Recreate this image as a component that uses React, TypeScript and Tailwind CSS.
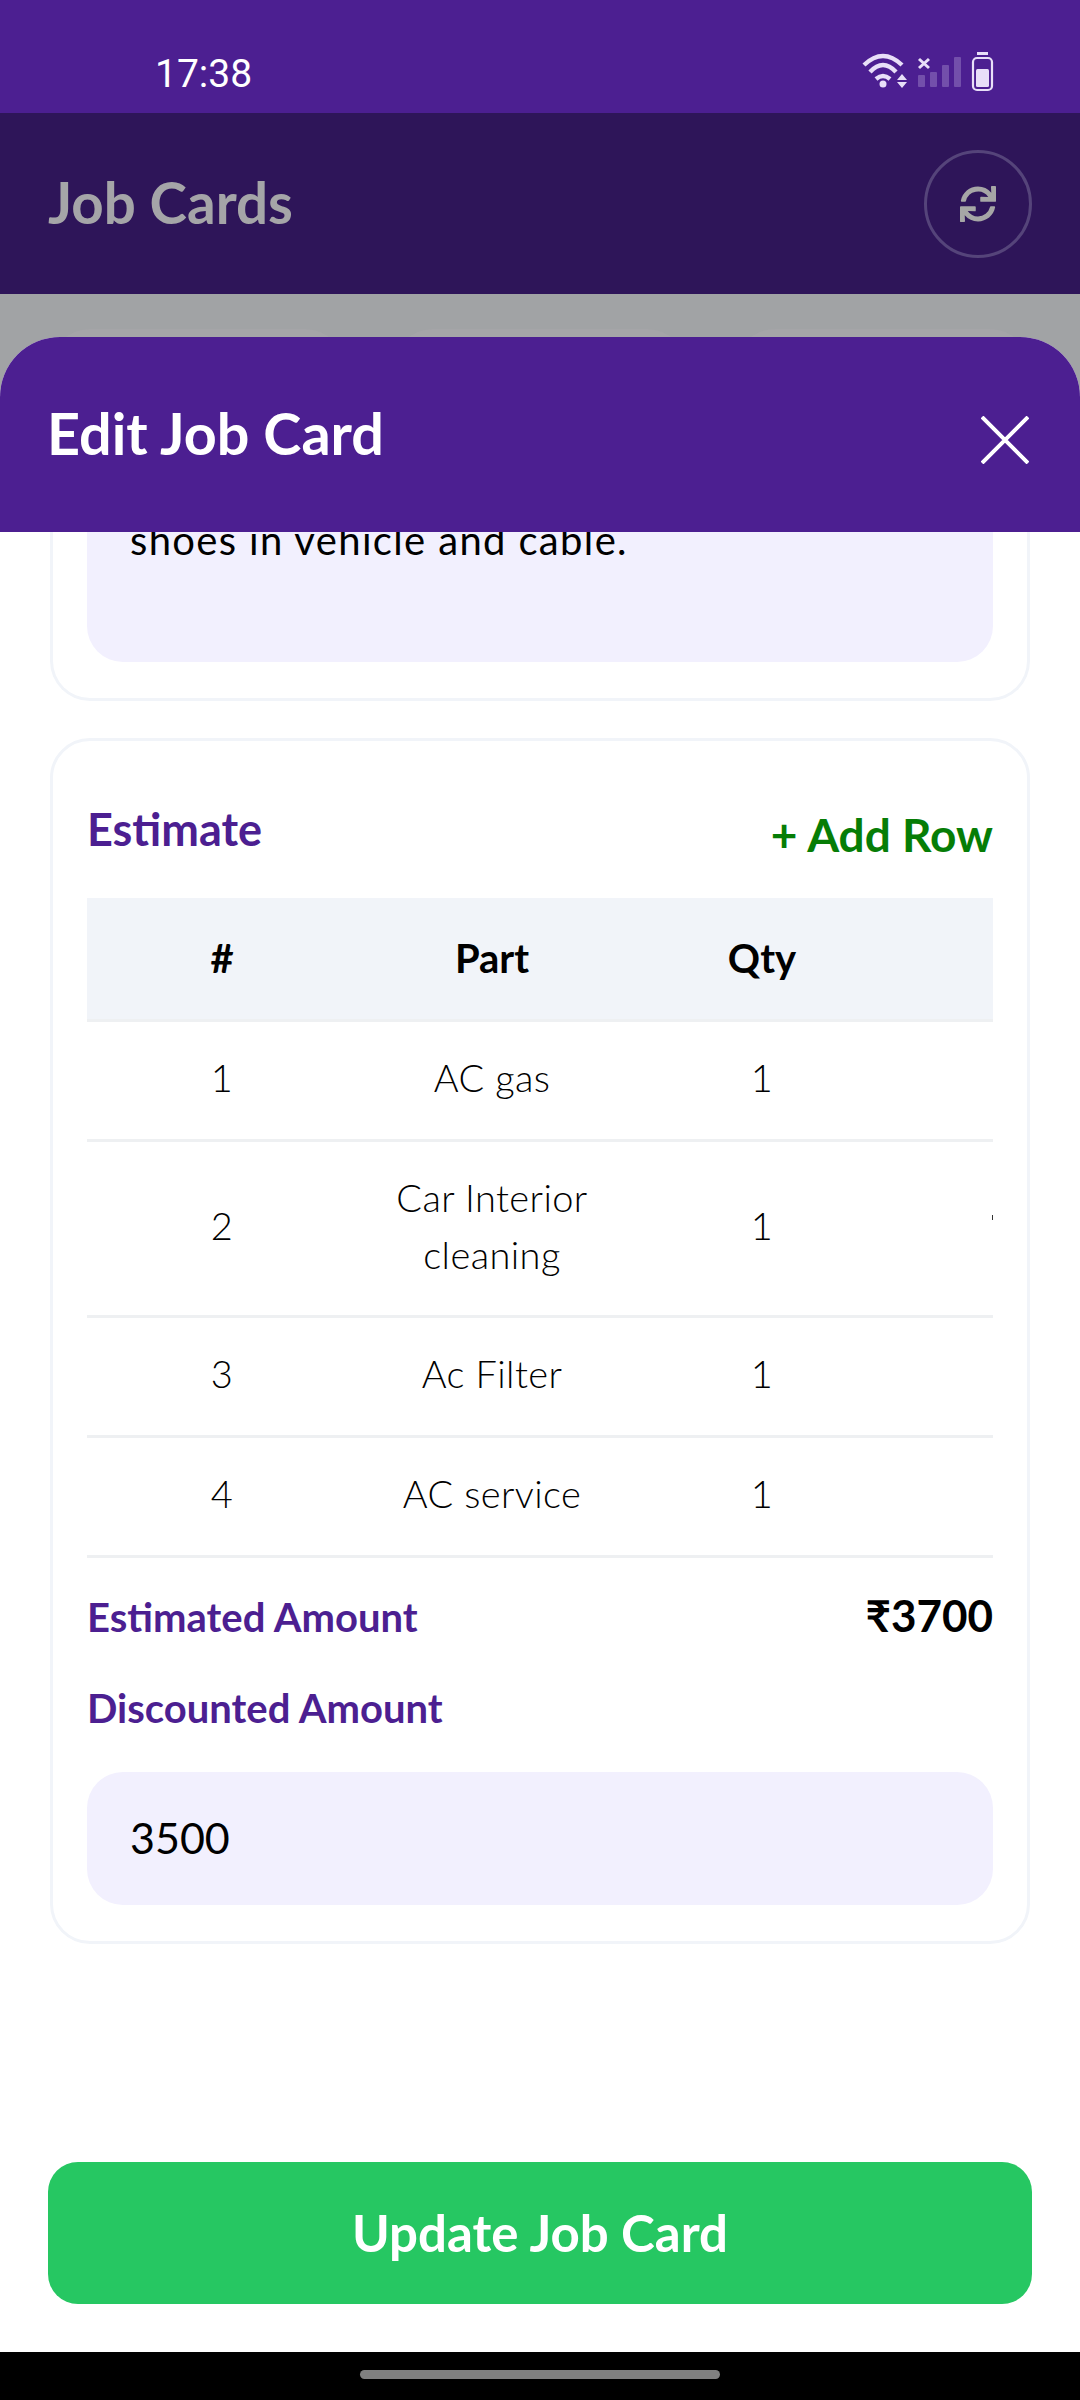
import React from 'react';
import { FaSync } from 'react-icons/fa';

const PURPLE = 'bg-[#4c1f91]';

const rows = [
  { id: '1', part: ['AC gas'], qty: '1', h: 'h-[120px]' },
  { id: '2', part: ['Car Interior', 'cleaning'], qty: '1', h: 'h-[176px]' },
  { id: '3', part: ['Ac Filter'], qty: '1', h: 'h-[120px]' },
  { id: '4', part: ['AC service'], qty: '1', h: 'h-[120px]' },
];

const StatusIcons = () => (
  <svg width="136" height="44" viewBox="0 0 136 44" className="text-[#e8dff8]">
    {/* wifi */}
    <g fill="none" stroke="currentColor" strokeWidth="4.4">
      <path d="M4 15 Q23 -3 42 15" />
      <path d="M10 22 Q23 8 36 22" />
      <path d="M16 29 Q23 23 30 29" />
    </g>
    <circle cx="23" cy="34" r="3.5" fill="currentColor" />
    <path d="M42 24 L47 30 H37 Z M42 38 L37 32 H47 Z" fill="currentColor" />
    {/* no signal */}
    <path d="M59 9 L69 18 M69 9 L59 18" stroke="currentColor" strokeWidth="3" fill="none" />
    <g fill="currentColor" opacity="0.25">
      <rect x="58" y="25" width="7" height="12" rx="1" />
      <rect x="70" y="22" width="7" height="15" rx="1" />
      <rect x="82" y="15" width="7" height="22" rx="1" />
      <rect x="94" y="7" width="7" height="30" rx="1" />
    </g>
    {/* battery */}
    <rect x="117" y="2" width="11" height="3" fill="currentColor" />
    <rect x="113" y="8" width="19" height="32" rx="4" fill="none" stroke="currentColor" strokeWidth="2.2" />
    <rect x="116" y="19" width="13" height="18" rx="1.5" fill="currentColor" />
  </svg>
);

const CloseIcon = () => (
  <svg width="48" height="48" viewBox="0 0 48 48" fill="none" stroke="white" strokeWidth="4">
    <path d="M1 1 L47 47 M47 1 L1 47" />
  </svg>
);

export default function App() {
  return (
    <div className="relative flex h-[2400px] w-[1080px] flex-col overflow-hidden bg-black font-['Lato',sans-serif]">
      {/* status bar */}
      <div className={`flex h-[113px] shrink-0 items-start justify-between ${PURPLE} pl-[155px] pr-[84px]`}>
        <span className="mt-[52px] font-['Roboto',sans-serif] text-[39px] leading-[44px] font-normal text-white">17:38</span>
        <div className="mt-[50px]">
          <StatusIcons />
        </div>
      </div>

      {/* screen behind the sheet, dimmed */}
      <div className="flex h-[181px] shrink-0 items-center justify-between bg-[#2e1559] pr-[48px] pl-[48px]">
        <span className="pb-[2px] text-[56.5px] font-bold text-[#a5a5a8]">Job Cards</span>
        <div className="flex h-[108px] w-[108px] items-center justify-center rounded-full border-[3px] border-[#55447a] text-[#a6a6a6]">
          <FaSync size={36} />
        </div>
      </div>

      <div className="relative flex-1 bg-[#a1a3a5]">
        <div className="flex gap-[48px] px-[50px] pt-[35px]">
          <div className="h-[60px] flex-1 rounded-t-[40px] bg-[#a5a5a8]" />
          <div className="h-[60px] flex-1 rounded-t-[40px] bg-[#a5a5a8]" />
          <div className="h-[60px] flex-1 rounded-t-[40px] bg-[#a5a5a8]" />
        </div>

        {/* edit sheet */}
        <div className="absolute inset-x-0 top-[43px] bottom-0 flex flex-col overflow-hidden rounded-t-[60px] bg-white">
          <div className={`z-10 flex h-[195px] shrink-0 items-center justify-between ${PURPLE} pr-[51px] pl-[47px]`}>
            <span className="pb-[3px] text-[57.5px] font-bold text-white">Edit Job Card</span>
            <div className="mt-[10px]">
              <CloseIcon />
            </div>
          </div>

          <div className="flex-1 overflow-hidden px-[50px]">
            <div className="mt-[-40px] flex flex-col gap-[37px]">
              {/* description card, scrolled */}
              <div className="rounded-b-[40px] border-x-[3px] border-b-[3px] border-[#f1f4f9] px-[34px] pb-[36px]">
                <div className="h-[170px] rounded-b-[36px] bg-[#f2f0fe] px-[43px] pt-[26px] text-[40px] leading-[44px] tracking-[1.35px] text-black">
                  shoes in vehicle and cable.
                </div>
              </div>

              {/* estimate card */}
              <div className="h-[1206px] rounded-[40px] border-[3px] border-[#f1f4f9] px-[34px] pt-[60px]">
                <div className="flex h-[97px] items-start justify-between">
                  <span className="mt-[1px] text-[45px] leading-[54px] font-bold text-[#4c1f91]">Estimate</span>
                  <span className="mt-[6px] text-[46px] leading-[55px] font-bold text-[#067d06]">+ Add Row</span>
                </div>

                <div className="overflow-hidden">
                  <div className="flex h-[124px] w-[1080px] items-center border-b-[3px] border-[#eef0f2] bg-[#f1f4f9] pb-[2px] text-[40px] font-bold text-black">
                    <span className="w-[270px] text-center">#</span>
                    <span className="w-[270px] text-center">Part</span>
                    <span className="w-[270px] text-center">Qty</span>
                  </div>
                  {rows.map(r => (
                    <div
                      key={r.id}
                      className={`flex w-[1080px] items-center border-b-[3px] border-[#eef0f2] pb-[6px] text-[38px] leading-[57px] font-light tracking-[0.4px] text-black ${r.h}`}
                    >
                      <span className="w-[270px] text-center">{r.id}</span>
                      <span className="w-[270px] text-center">
                        {r.part.map(l => (
                          <span key={l} className="block">{l}</span>
                        ))}
                      </span>
                      <span className="w-[270px] text-center">{r.qty}</span>
                      {r.id === '2' && <div className="mb-[16px] ml-[95px] h-[5px] w-[1px] bg-[#333333]" />}
                    </div>
                  ))}
                </div>

                <div className="mt-[24px] flex items-baseline justify-between">
                  <span className="text-[40px] font-bold text-[#4c1f91]">Estimated Amount</span>
                  <span className="text-[44px] font-bold text-black">₹3700</span>
                </div>
                <div className="mt-[30px] text-[40px] font-bold text-[#4c1f91]">Discounted Amount</div>
                <div className="mt-[34px] flex h-[133px] items-center rounded-[36px] bg-[#f2f0fe] px-[43px] text-[43px] text-black">
                  3500
                </div>
              </div>
            </div>
          </div>

          <div className="shrink-0 bg-white px-[48px] pb-[48px]">
            <div className="flex h-[142px] items-center justify-center rounded-[30px] bg-[#26c762] text-[51px] font-bold text-white">
              Update Job Card
            </div>
          </div>
        </div>
      </div>

      {/* gesture bar */}
      <div className="flex h-[48px] shrink-0 items-start justify-center bg-black pt-[18px]">
        <div className="h-[9px] w-[360px] rounded-full bg-[#808080]" />
      </div>
    </div>
  );
}
